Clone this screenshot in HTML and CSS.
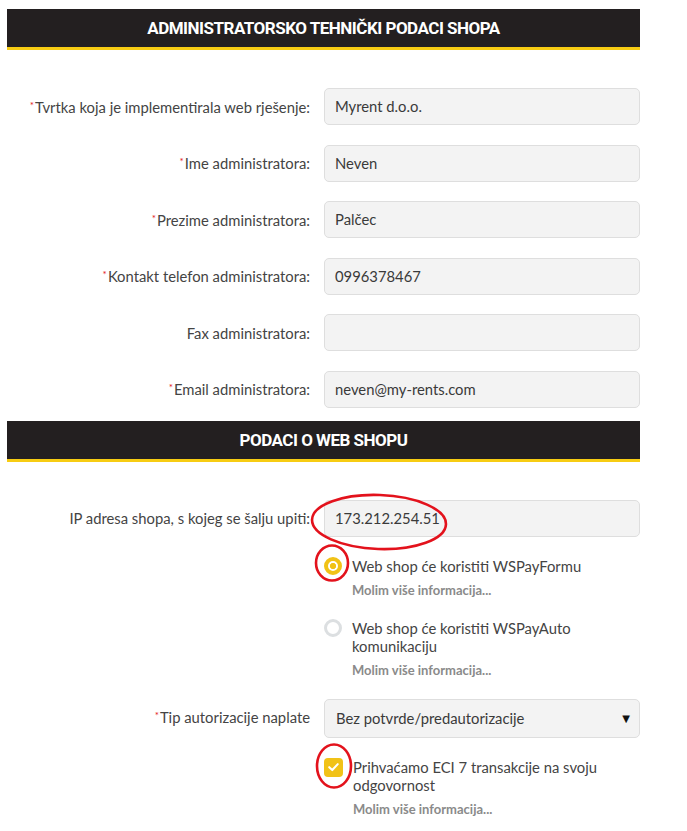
FILE: index.html
```html
<!DOCTYPE html>
<html lang="hr">
<head>
<meta charset="utf-8">
<title>Podaci shopa</title>
<link rel="stylesheet" href="styles.css">
</head>
<body>
<div class="page">
  <section class="sec">
    <h2 class="sec-title">ADMINISTRATORSKO TEHNIČKI PODACI SHOPA</h2>
    <div class="fields">
      <div class="row">
        <label class="lbl"><span class="req">*</span>Tvrtka koja je implementirala web rješenje:</label>
        <div class="input">Myrent d.o.o.</div>
      </div>
      <div class="row">
        <label class="lbl"><span class="req">*</span>Ime administratora:</label>
        <div class="input">Neven</div>
      </div>
      <div class="row">
        <label class="lbl"><span class="req">*</span>Prezime administratora:</label>
        <div class="input">Palčec</div>
      </div>
      <div class="row">
        <label class="lbl"><span class="req">*</span>Kontakt telefon administratora:</label>
        <div class="input">0996378467</div>
      </div>
      <div class="row">
        <label class="lbl">Fax administratora:</label>
        <div class="input"></div>
      </div>
      <div class="row">
        <label class="lbl"><span class="req">*</span>Email administratora:</label>
        <div class="input">neven@my-rents.com</div>
      </div>
    </div>
  </section>

  <section class="sec sec-2">
    <h2 class="sec-title">PODACI O WEB SHOPU</h2>
    <div class="fields">
      <div class="row">
        <label class="lbl">IP adresa shopa, s kojeg se šalju upiti:</label>
        <div class="input">173.212.254.51</div>
      </div>
      <div class="row row-opt">
        <div class="option">
          <span class="radio radio-on"></span>
          <div class="opt-body">
            <div class="opt-text">Web shop će koristiti WSPayFormu</div>
            <div class="hint">Molim više informacija...</div>
          </div>
        </div>
      </div>
      <div class="row row-opt">
        <div class="option">
          <span class="radio"></span>
          <div class="opt-body">
            <div class="opt-text">Web shop će koristiti WSPayAuto<br>komunikaciju</div>
            <div class="hint">Molim više informacija...</div>
          </div>
        </div>
      </div>
      <div class="row row-select">
        <label class="lbl"><span class="req">*</span>Tip autorizacije naplate</label>
        <div class="input select">Bez potvrde/predautorizacije<span class="caret">▼</span></div>
      </div>
      <div class="row row-opt">
        <div class="option">
          <span class="check"><svg viewBox="0 0 20 20" width="20" height="20"><path d="M5.5 10.2 L8.7 13.2 L14.5 7" fill="none" stroke="#fff" stroke-width="2.2" stroke-linecap="round" stroke-linejoin="round"/></svg></span>
          <div class="opt-body">
            <div class="opt-text">Prihvaćamo ECI 7 transakcije na svoju<br>odgovornost</div>
            <div class="hint">Molim više informacija...</div>
          </div>
        </div>
      </div>
    </div>
  </section>

  <svg class="marks" width="687" height="831" viewBox="0 0 687 831">
    <ellipse cx="379" cy="522" rx="67" ry="27" fill="none" stroke="#e3121c" stroke-width="2.6" transform="rotate(2 379 522)"/>
    <ellipse cx="332" cy="563" rx="16" ry="17.5" fill="none" stroke="#e3121c" stroke-width="2.6"/>
    <ellipse cx="334" cy="766" rx="17" ry="21.5" fill="none" stroke="#e3121c" stroke-width="2.6"/>
  </svg>
</div>
</body>
</html>
```

FILE: styles.css
```css
* { box-sizing: border-box; }

html, body {
  margin: 0;
  padding: 0;
  background: #fff;
}

body {
  font-family: Lato, "Open Sans", "DejaVu Sans", sans-serif;
  color: #444;
}

.page {
  position: relative;
  width: 687px;
  height: 831px;
  padding: 9px 0 0 7px;
  overflow: hidden;
}

.sec {
  width: 633px;
}

.sec-2 {
  margin-top: 13px;
}

.sec-title {
  margin: 0;
  height: 41px;
  background: #231f20;
  border-bottom: 3px solid #f7cc13;
  color: #fff;
  font-family: Roboto, "Liberation Sans", sans-serif;
  font-weight: 700;
  font-size: 17px;
  letter-spacing: -0.5px;
  text-align: center;
  line-height: 38px;
}

.fields {
  display: flex;
  flex-direction: column;
  gap: 19.6px;
  padding-top: 38px;
}

.sec-2 .fields {
  gap: 20px;
}

.row {
  display: grid;
  grid-template-columns: 317px 1fr;
  align-items: center;
}

.lbl {
  text-align: right;
  padding-right: 14px;
  font-size: 14.8px;
  color: #444;
  white-space: nowrap;
}

.req {
  color: #e3121c;
  font-size: 10px;
  vertical-align: 4px;
  margin-right: 1px;
}

.input {
  height: 37px;
  background: #f3f3f3;
  border: 1px solid #dedede;
  border-radius: 5px;
  padding: 0 10px;
  font-size: 14.8px;
  line-height: 35px;
  color: #3a3a3a;
}

.select {
  position: relative;
  height: 39px;
  line-height: 37px;
  padding-left: 11px;
}

.caret {
  position: absolute;
  right: 9px;
  top: 0;
  font-size: 10px;
  color: #111;
}

.row-select .lbl {
  align-self: start;
  padding-top: 9px;
}

.row-opt .option {
  grid-column: 2;
}

.option {
  display: flex;
  align-items: flex-start;
  gap: 10px;
}

.opt-body {
  display: flex;
  flex-direction: column;
  gap: 6px;
}

.opt-text {
  font-size: 14.8px;
  line-height: 18px;
  color: #444;
}

.hint {
  font-size: 13px;
  font-weight: 700;
  line-height: 18px;
  color: #8a8a8a;
}

.radio {
  flex: none;
  width: 18px;
  height: 18px;
  border-radius: 50%;
  border: 3.5px solid #dcdfe1;
  background: #fff;
}

.radio-on {
  border: 4px solid #f1c217;
  background: radial-gradient(circle, #f1c217 0 2.8px, #fff 3.4px);
}

.check {
  flex: none;
  width: 19px;
  height: 19px;
  border-radius: 4px;
  background: #f1c217;
  display: flex;
  align-items: center;
  justify-content: center;
}

.check svg {
  display: block;
}

.marks {
  position: absolute;
  left: 0;
  top: 0;
  pointer-events: none;
}
```
